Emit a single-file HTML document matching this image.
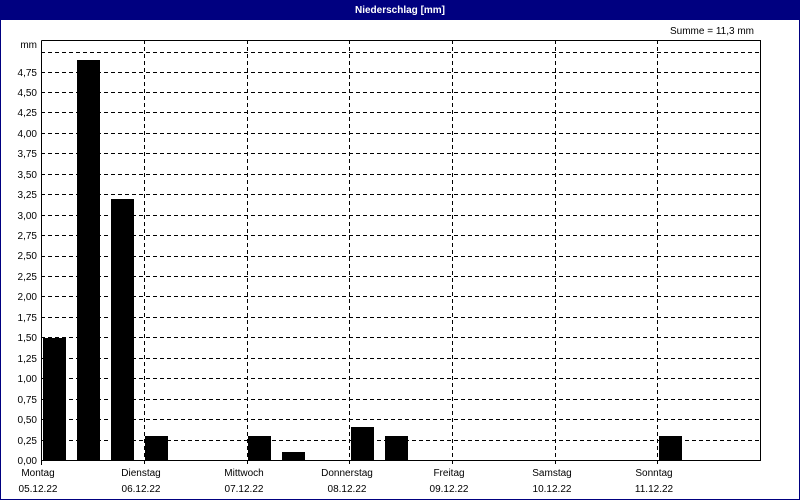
<!DOCTYPE html>
<html><head><meta charset="utf-8"><style>
html,body{margin:0;padding:0;background:#fff}
svg{display:block}
text{font-family:"Liberation Sans",sans-serif;font-size:10px;fill:#000}
</style></head><body>
<svg width="800" height="500" viewBox="0 0 800 500" xmlns="http://www.w3.org/2000/svg">
<rect x="0" y="0" width="800" height="500" fill="#fff"/>
<rect x="0" y="0" width="800" height="20" fill="#000080"/>
<rect x="0.5" y="0.5" width="799" height="499" fill="none" stroke="#000080"/>
<text x="400" y="13" text-anchor="middle" style="fill:#fff;font-weight:bold">Niederschlag [mm]</text>
<text x="754" y="34" text-anchor="end">Summe = 11,3 mm</text>
<g stroke="#000" stroke-dasharray="4,3" stroke-width="1">
<line x1="41" x2="760" y1="440.5" y2="440.5"/><line x1="41" x2="760" y1="419.5" y2="419.5"/>
<line x1="41" x2="760" y1="399.5" y2="399.5"/><line x1="41" x2="760" y1="378.5" y2="378.5"/>
<line x1="41" x2="760" y1="358.5" y2="358.5"/><line x1="41" x2="760" y1="337.5" y2="337.5"/>
<line x1="41" x2="760" y1="317.5" y2="317.5"/><line x1="41" x2="760" y1="296.5" y2="296.5"/>
<line x1="41" x2="760" y1="276.5" y2="276.5"/><line x1="41" x2="760" y1="256.5" y2="256.5"/>
<line x1="41" x2="760" y1="235.5" y2="235.5"/><line x1="41" x2="760" y1="215.5" y2="215.5"/>
<line x1="41" x2="760" y1="194.5" y2="194.5"/><line x1="41" x2="760" y1="174.5" y2="174.5"/>
<line x1="41" x2="760" y1="153.5" y2="153.5"/><line x1="41" x2="760" y1="133.5" y2="133.5"/>
<line x1="41" x2="760" y1="112.5" y2="112.5"/><line x1="41" x2="760" y1="92.5" y2="92.5"/>
<line x1="41" x2="760" y1="72.5" y2="72.5"/><line x1="41" x2="760" y1="52.5" y2="52.5"/>
<line y1="40" y2="464" x1="144.5" x2="144.5"/><line y1="40" y2="464" x1="247.5" x2="247.5"/>
<line y1="40" y2="464" x1="349.5" x2="349.5"/><line y1="40" y2="464" x1="452.5" x2="452.5"/>
<line y1="40" y2="464" x1="555.5" x2="555.5"/><line y1="40" y2="464" x1="657.5" x2="657.5"/>
</g>
<g stroke="#000" fill="none">
<polyline points="41.5,40.5 760.5,40.5 760.5,460.5 41.5,460.5 41.5,40.5"/>
<line x1="41.5" x2="41.5" y1="460" y2="465"/>
</g>
<g fill="#000">
<rect x="43" y="338" width="23" height="122"/>
<rect x="77" y="60" width="23" height="400"/>
<rect x="111" y="199" width="23" height="261"/>
<rect x="145" y="436" width="23" height="24"/>
<rect x="248" y="436" width="23" height="24"/>
<rect x="282" y="452" width="23" height="8"/>
<rect x="351" y="427" width="23" height="33"/>
<rect x="385" y="436" width="23" height="24"/>
<rect x="659" y="436" width="23" height="24"/>
</g>
<g text-anchor="end">
<text x="37" y="48">mm</text>
<text x="37" y="76">4,75</text><text x="37" y="96">4,50</text><text x="37" y="116">4,25</text>
<text x="37" y="137">4,00</text><text x="37" y="157">3,75</text><text x="37" y="178">3,50</text>
<text x="37" y="198">3,25</text><text x="37" y="219">3,00</text><text x="37" y="239">2,75</text>
<text x="37" y="259">2,50</text><text x="37" y="280">2,25</text><text x="37" y="300">2,00</text>
<text x="37" y="321">1,75</text><text x="37" y="341">1,50</text><text x="37" y="362">1,25</text>
<text x="37" y="382">1,00</text><text x="37" y="403">0,75</text><text x="37" y="423">0,50</text>
<text x="37" y="444">0,25</text><text x="37" y="464">0,00</text>
</g>
<g text-anchor="middle">
<text x="38" y="476">Montag</text><text x="38" y="492">05.12.22</text>
<text x="141" y="476">Dienstag</text><text x="141" y="492">06.12.22</text>
<text x="244" y="476">Mittwoch</text><text x="244" y="492">07.12.22</text>
<text x="347" y="476">Donnerstag</text><text x="347" y="492">08.12.22</text>
<text x="449" y="476">Freitag</text><text x="449" y="492">09.12.22</text>
<text x="552" y="476">Samstag</text><text x="552" y="492">10.12.22</text>
<text x="654" y="476">Sonntag</text><text x="654" y="492">11.12.22</text>
</g>
</svg>
</body></html>
